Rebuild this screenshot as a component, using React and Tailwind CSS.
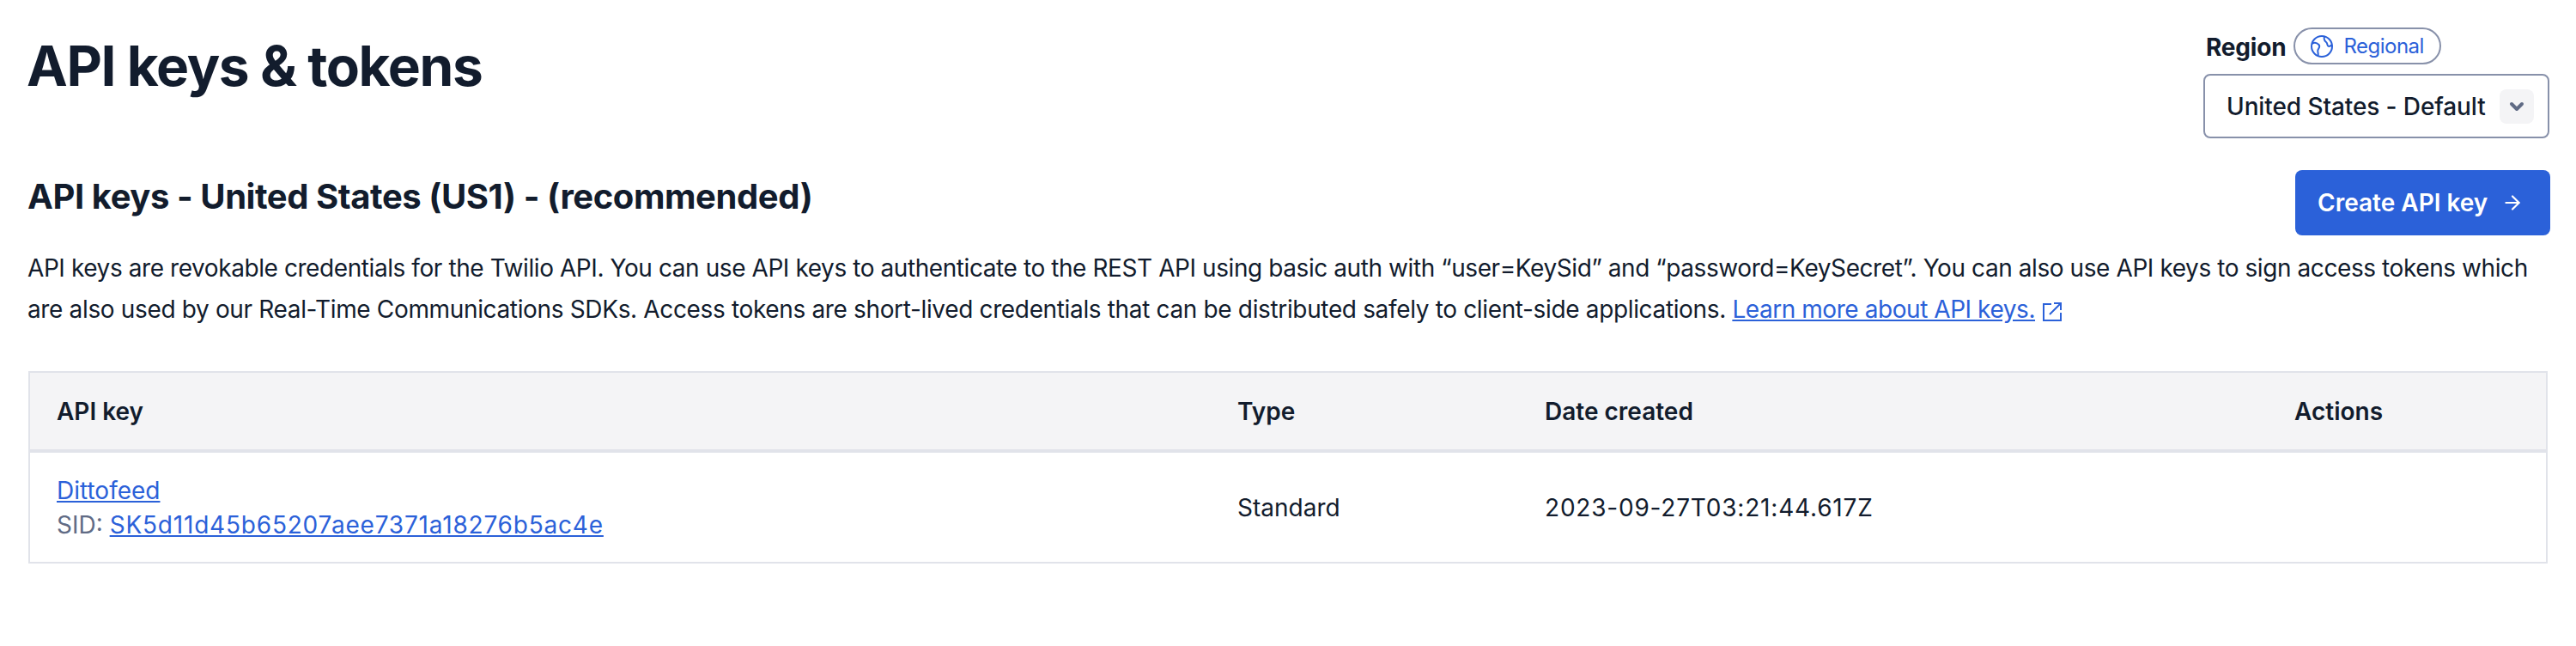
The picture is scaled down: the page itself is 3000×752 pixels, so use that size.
import { ArrowRight, ChevronDown } from 'lucide-react';

function GlobeIcon() {
  return (
    <svg viewBox="0 0 26 26" fill="none" stroke="currentColor" strokeWidth="2" strokeLinejoin="round" className="h-[26px] w-[26px]">
      <circle cx="13" cy="13" r="12" />
      <path d="M1.5 10c3-2 6-1 8 1s0 4-1 6 1 4 0 7" />
      <path d="M16 1.5c-1 3 0 5 2 6.5s1 5 3 5 3-1 4-2" />
    </svg>
  );
}

function LinkOutIcon() {
  return (
    <svg viewBox="0 0 24 24" fill="none" stroke="currentColor" strokeWidth="2" className="ml-[8px] inline h-[24px] w-[24px] align-[-5px] text-[#2b61d9]">
      <path d="M11 3H2v19h20v-9" />
      <path d="M9 15L22 2M14 2h8v8" />
    </svg>
  );
}

export default function App() {
  return (
    <div className="min-h-[752px] bg-white px-[33px] font-['Inter',sans-serif] text-[#121c2d]">
      <div className="flex items-start justify-between">
        <h1 className="mt-[37px] ml-[-2px] text-[64px] leading-[80px] font-bold tracking-[-1.4px]">API keys &amp; tokens</h1>
        <div className="mt-[32px] mr-[-2px] w-[403px]">
          <div className="flex items-center gap-[9px] pl-[3px]">
            <span className="pt-[3px] text-[28px] leading-[40px] font-bold tracking-[-0.2px]">Region</span>
            <span className="flex h-[43px] items-center gap-[12px] rounded-full border-2 border-[#8891aa] px-[18px] text-[24px] tracking-[-0.5px] text-[#2b61d9]">
              <GlobeIcon />
              Regional
            </span>
          </div>
          <div className="mt-[11px] flex h-[75px] items-center justify-between rounded-lg border-2 border-[#8891aa] pr-[16px] pl-[25px]">
            <span className="text-[28px] font-medium tracking-[-0.1px]">United States - Default</span>
            <span className="flex h-[40px] w-[40px] items-center justify-center rounded-lg bg-[#f4f4f6] text-[#606b85]">
              <ChevronDown className="h-[24px] w-[24px]" strokeWidth={4} />
            </span>
          </div>
        </div>
      </div>

      <div className="mt-[37px] flex items-start justify-between">
        <h2 className="mt-[7px] ml-[-1px] text-[40px] leading-[48px] font-bold tracking-[-0.43px]">API keys - United States (US1) - (recommended)</h2>
        <button className="mr-[-3px] flex h-[76px] w-[297px] items-center gap-[16px] rounded-lg bg-[#2b61d9] pl-[26px] text-[28px] font-semibold text-white">
          Create API key
          <ArrowRight className="h-[26px] w-[26px]" strokeWidth={2} />
        </button>
      </div>

      <p className="mt-[14px] ml-[-1px] text-[28px] leading-[48px] tracking-[-0.42px]">
        API keys are revokable credentials for the Twilio API. You can use API keys to authenticate to the REST API using basic auth with “user=KeySid” and “password=KeySecret”. You can also use API keys to sign access tokens which{' '}
        <span className="tracking-[-0.35px]">are also used by our Real-Time Communications SDKs. Access tokens are short-lived credentials that can be distributed safely to client-side applications.</span>{' '}
        <a className="tracking-[-0.44px] text-[#2b61d9] underline" href="#">Learn more about API keys.</a>
        <LinkOutIcon />
      </p>

      <table className="mt-[48px] w-full table-fixed border-2 border-[#e1e3ea] text-[28px]">
        <thead className="border-b-4 border-[#e1e3ea] bg-[#f4f4f6]">
          <tr className="h-[92px] text-left">
            <th className="w-[1375px] pl-[31px] font-semibold">API key</th>
            <th className="w-[358px] pl-[32px] font-semibold">Type</th>
            <th className="w-[873px] pl-[32px] font-semibold">Date created</th>
            <th className="pl-[32px] font-semibold">Actions</th>
          </tr>
        </thead>
        <tbody>
          <tr className="h-[130px]">
            <td className="pl-[31px] leading-[40px]">
              <a className="block w-fit text-[#2b61d9] underline" href="#">Dittofeed</a>
              <div className="text-[#606b85]">SID: <a className="tracking-[0.8px] text-[#2b61d9] underline" href="#">SK5d11d45b65207aee7371a18276b5ac4e</a></div>
            </td>
            <td className="pl-[32px]">Standard</td>
            <td className="pl-[32px] tracking-[0.8px]">2023-09-27T03:21:44.617Z</td>
            <td />
          </tr>
        </tbody>
      </table>
    </div>
  );
}
